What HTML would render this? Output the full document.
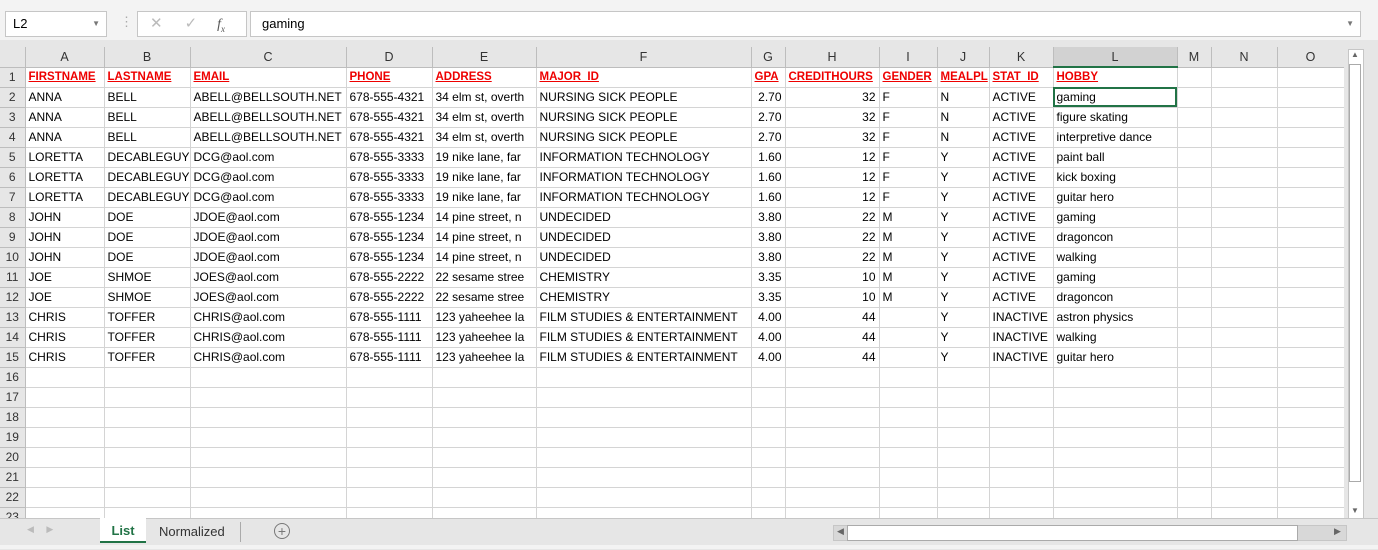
<!DOCTYPE html><html><head><style>
body{margin:0;width:1378px;height:549px;background:#e6e6e6;font-family:"Liberation Sans",sans-serif;position:relative;overflow:hidden}
.abs{position:absolute}
table{border-collapse:collapse;table-layout:fixed;position:absolute;left:0;top:47px;background:#fff;width:1344px}
td{box-sizing:border-box;height:20px;border-right:1px solid #d4d4d4;border-bottom:1px solid #d4d4d4;font-size:12px;padding:0 0 0 3px;white-space:nowrap;overflow:hidden;color:#000}
tr.h td{background:#e6e6e6;text-align:center;color:#333;border-color:#bdbdbd;padding:0;font-size:12.5px}
td.rh{background:#e6e6e6;text-align:center;color:#333;padding:0;border-color:#bdbdbd}
td.r{text-align:right;padding-right:3px}
tr.hd td.c{color:#e00;font-weight:bold;text-decoration:underline;font-size:11.5px}
</style></head><body>
<div class="abs" style="left:0;top:0;width:1378px;height:40px;background:#f3f3f3"></div>
<div class="abs" style="left:5px;top:11px;width:100px;height:24px;background:#fff;border:1px solid #c6c6c6;font-size:13px;line-height:24px;text-indent:7px">L2<span style="position:absolute;right:6px;top:0;font-size:8px;color:#777">▼</span></div>
<div class="abs" style="left:120px;top:14px;color:#aaa;font-size:13px">⋮</div>
<div class="abs" style="left:137px;top:11px;width:108px;height:24px;background:#fff;border:1px solid #c6c6c6;color:#bbb;font-size:15px;line-height:24px"><span style="margin-left:12px">✕</span><span style="margin-left:22px">✓</span><span style="margin-left:20px;color:#555;font-style:italic;font-family:'Liberation Serif';font-size:14px">f<sub style="font-size:9px">x</sub></span></div>
<div class="abs" style="left:250px;top:11px;width:1109px;height:24px;background:#fff;border:1px solid #c6c6c6;font-size:13px;line-height:24px;text-indent:11px">gaming<span style="position:absolute;right:6px;top:0;font-size:8px;color:#777">▼</span></div>
<table>
<colgroup><col style="width:25px"><col style="width:79px"><col style="width:86px"><col style="width:156px"><col style="width:86px"><col style="width:104px"><col style="width:215px"><col style="width:34px"><col style="width:94px"><col style="width:58px"><col style="width:52px"><col style="width:64px"><col style="width:124px"><col style="width:34px"><col style="width:66px"><col style="width:67px"></colgroup>
<tr class="h"><td></td><td>A</td><td>B</td><td>C</td><td>D</td><td>E</td><td>F</td><td>G</td><td>H</td><td>I</td><td>J</td><td>K</td><td style="background:#d2d2d2;border-bottom:2px solid #217346">L</td><td>M</td><td>N</td><td>O</td></tr>
<tr class="hd"><td class="rh">1</td><td class="c">FIRSTNAME</td><td class="c">LASTNAME</td><td class="c">EMAIL</td><td class="c">PHONE</td><td class="c">ADDRESS</td><td class="c">MAJOR_ID</td><td class="c">GPA</td><td class="c">CREDITHOURS</td><td class="c">GENDER</td><td class="c">MEALPL</td><td class="c">STAT_ID</td><td class="c">HOBBY</td><td></td><td></td><td></td></tr>
<tr><td class="rh">2</td><td>ANNA</td><td>BELL</td><td>ABELL@BELLSOUTH.NET</td><td>678-555-4321</td><td>34 elm st, overth</td><td>NURSING SICK PEOPLE</td><td class="r">2.70</td><td class="r">32</td><td>F</td><td>N</td><td>ACTIVE</td><td style="outline:2px solid #217346;outline-offset:-2px">gaming</td><td></td><td></td><td></td></tr>
<tr><td class="rh">3</td><td>ANNA</td><td>BELL</td><td>ABELL@BELLSOUTH.NET</td><td>678-555-4321</td><td>34 elm st, overth</td><td>NURSING SICK PEOPLE</td><td class="r">2.70</td><td class="r">32</td><td>F</td><td>N</td><td>ACTIVE</td><td>figure skating</td><td></td><td></td><td></td></tr>
<tr><td class="rh">4</td><td>ANNA</td><td>BELL</td><td>ABELL@BELLSOUTH.NET</td><td>678-555-4321</td><td>34 elm st, overth</td><td>NURSING SICK PEOPLE</td><td class="r">2.70</td><td class="r">32</td><td>F</td><td>N</td><td>ACTIVE</td><td>interpretive dance</td><td></td><td></td><td></td></tr>
<tr><td class="rh">5</td><td>LORETTA</td><td>DECABLEGUY</td><td>DCG@aol.com</td><td>678-555-3333</td><td>19 nike lane, far</td><td>INFORMATION TECHNOLOGY</td><td class="r">1.60</td><td class="r">12</td><td>F</td><td>Y</td><td>ACTIVE</td><td>paint ball</td><td></td><td></td><td></td></tr>
<tr><td class="rh">6</td><td>LORETTA</td><td>DECABLEGUY</td><td>DCG@aol.com</td><td>678-555-3333</td><td>19 nike lane, far</td><td>INFORMATION TECHNOLOGY</td><td class="r">1.60</td><td class="r">12</td><td>F</td><td>Y</td><td>ACTIVE</td><td>kick boxing</td><td></td><td></td><td></td></tr>
<tr><td class="rh">7</td><td>LORETTA</td><td>DECABLEGUY</td><td>DCG@aol.com</td><td>678-555-3333</td><td>19 nike lane, far</td><td>INFORMATION TECHNOLOGY</td><td class="r">1.60</td><td class="r">12</td><td>F</td><td>Y</td><td>ACTIVE</td><td>guitar hero</td><td></td><td></td><td></td></tr>
<tr><td class="rh">8</td><td>JOHN</td><td>DOE</td><td>JDOE@aol.com</td><td>678-555-1234</td><td>14 pine street, n</td><td>UNDECIDED</td><td class="r">3.80</td><td class="r">22</td><td>M</td><td>Y</td><td>ACTIVE</td><td>gaming</td><td></td><td></td><td></td></tr>
<tr><td class="rh">9</td><td>JOHN</td><td>DOE</td><td>JDOE@aol.com</td><td>678-555-1234</td><td>14 pine street, n</td><td>UNDECIDED</td><td class="r">3.80</td><td class="r">22</td><td>M</td><td>Y</td><td>ACTIVE</td><td>dragoncon</td><td></td><td></td><td></td></tr>
<tr><td class="rh">10</td><td>JOHN</td><td>DOE</td><td>JDOE@aol.com</td><td>678-555-1234</td><td>14 pine street, n</td><td>UNDECIDED</td><td class="r">3.80</td><td class="r">22</td><td>M</td><td>Y</td><td>ACTIVE</td><td>walking</td><td></td><td></td><td></td></tr>
<tr><td class="rh">11</td><td>JOE</td><td>SHMOE</td><td>JOES@aol.com</td><td>678-555-2222</td><td>22 sesame stree</td><td>CHEMISTRY</td><td class="r">3.35</td><td class="r">10</td><td>M</td><td>Y</td><td>ACTIVE</td><td>gaming</td><td></td><td></td><td></td></tr>
<tr><td class="rh">12</td><td>JOE</td><td>SHMOE</td><td>JOES@aol.com</td><td>678-555-2222</td><td>22 sesame stree</td><td>CHEMISTRY</td><td class="r">3.35</td><td class="r">10</td><td>M</td><td>Y</td><td>ACTIVE</td><td>dragoncon</td><td></td><td></td><td></td></tr>
<tr><td class="rh">13</td><td>CHRIS</td><td>TOFFER</td><td>CHRIS@aol.com</td><td>678-555-1111</td><td>123 yaheehee la</td><td>FILM STUDIES &amp; ENTERTAINMENT</td><td class="r">4.00</td><td class="r">44</td><td></td><td>Y</td><td>INACTIVE</td><td>astron physics</td><td></td><td></td><td></td></tr>
<tr><td class="rh">14</td><td>CHRIS</td><td>TOFFER</td><td>CHRIS@aol.com</td><td>678-555-1111</td><td>123 yaheehee la</td><td>FILM STUDIES &amp; ENTERTAINMENT</td><td class="r">4.00</td><td class="r">44</td><td></td><td>Y</td><td>INACTIVE</td><td>walking</td><td></td><td></td><td></td></tr>
<tr><td class="rh">15</td><td>CHRIS</td><td>TOFFER</td><td>CHRIS@aol.com</td><td>678-555-1111</td><td>123 yaheehee la</td><td>FILM STUDIES &amp; ENTERTAINMENT</td><td class="r">4.00</td><td class="r">44</td><td></td><td>Y</td><td>INACTIVE</td><td>guitar hero</td><td></td><td></td><td></td></tr>
<tr><td class="rh">16</td><td></td><td></td><td></td><td></td><td></td><td></td><td></td><td></td><td></td><td></td><td></td><td></td><td></td><td></td><td></td></tr>
<tr><td class="rh">17</td><td></td><td></td><td></td><td></td><td></td><td></td><td></td><td></td><td></td><td></td><td></td><td></td><td></td><td></td><td></td></tr>
<tr><td class="rh">18</td><td></td><td></td><td></td><td></td><td></td><td></td><td></td><td></td><td></td><td></td><td></td><td></td><td></td><td></td><td></td></tr>
<tr><td class="rh">19</td><td></td><td></td><td></td><td></td><td></td><td></td><td></td><td></td><td></td><td></td><td></td><td></td><td></td><td></td><td></td></tr>
<tr><td class="rh">20</td><td></td><td></td><td></td><td></td><td></td><td></td><td></td><td></td><td></td><td></td><td></td><td></td><td></td><td></td><td></td></tr>
<tr><td class="rh">21</td><td></td><td></td><td></td><td></td><td></td><td></td><td></td><td></td><td></td><td></td><td></td><td></td><td></td><td></td><td></td></tr>
<tr><td class="rh">22</td><td></td><td></td><td></td><td></td><td></td><td></td><td></td><td></td><td></td><td></td><td></td><td></td><td></td><td></td><td></td></tr>
<tr><td class="rh">23</td><td></td><td></td><td></td><td></td><td></td><td></td><td></td><td></td><td></td><td></td><td></td><td></td><td></td><td></td><td></td></tr>
</table>
<div class="abs" style="left:1344px;top:47px;width:34px;height:472px;background:#e6e6e6"></div>
<div class="abs" style="left:1348px;top:49px;width:14px;height:468px;background:#fff;border:1px solid #c6c6c6"></div>
<div class="abs" style="left:1349px;top:64px;width:12px;height:418px;background:#fff;border:1px solid #aaa;box-sizing:border-box"></div>
<div class="abs" style="left:1351px;top:50px;font-size:8px;color:#666">▲</div>
<div class="abs" style="left:1351px;top:506px;font-size:8px;color:#666">▼</div>
<div class="abs" style="left:0;top:518px;width:1378px;height:31px;background:#e6e6e6;border-top:1px solid #c6c6c6"></div>
<div class="abs" style="left:27px;top:524px;font-size:9px;color:#bbb">◀&nbsp;&nbsp;&nbsp;&nbsp;&nbsp;▶</div>
<div class="abs" style="left:100px;top:518px;width:46px;height:23px;background:#fff;border-bottom:2px solid #217346;color:#217346;font-weight:bold;font-size:13px;text-align:center;line-height:26px">List</div>
<div class="abs" style="left:159px;top:524px;font-size:13px;color:#333">Normalized</div>
<div class="abs" style="left:240px;top:522px;width:1px;height:20px;background:#aaa"></div>
<div class="abs" style="left:274px;top:523px;width:14px;height:14px;border:1.5px solid #777;border-radius:50%;color:#777;font-size:14px;line-height:14px;text-align:center">+</div>
<div class="abs" style="left:833px;top:525px;width:512px;height:14px;background:#d8d8d8;border:1px solid #c6c6c6"></div>
<div class="abs" style="left:847px;top:525px;width:449px;height:14px;background:#fff;border:1px solid #aaa"></div>
<div class="abs" style="left:837px;top:526px;font-size:9px;color:#666">◀</div>
<div class="abs" style="left:1334px;top:526px;font-size:9px;color:#666">▶</div>
<div class="abs" style="left:0;top:545px;width:1378px;height:4px;background:#f3f3f3"></div>
</body></html>
